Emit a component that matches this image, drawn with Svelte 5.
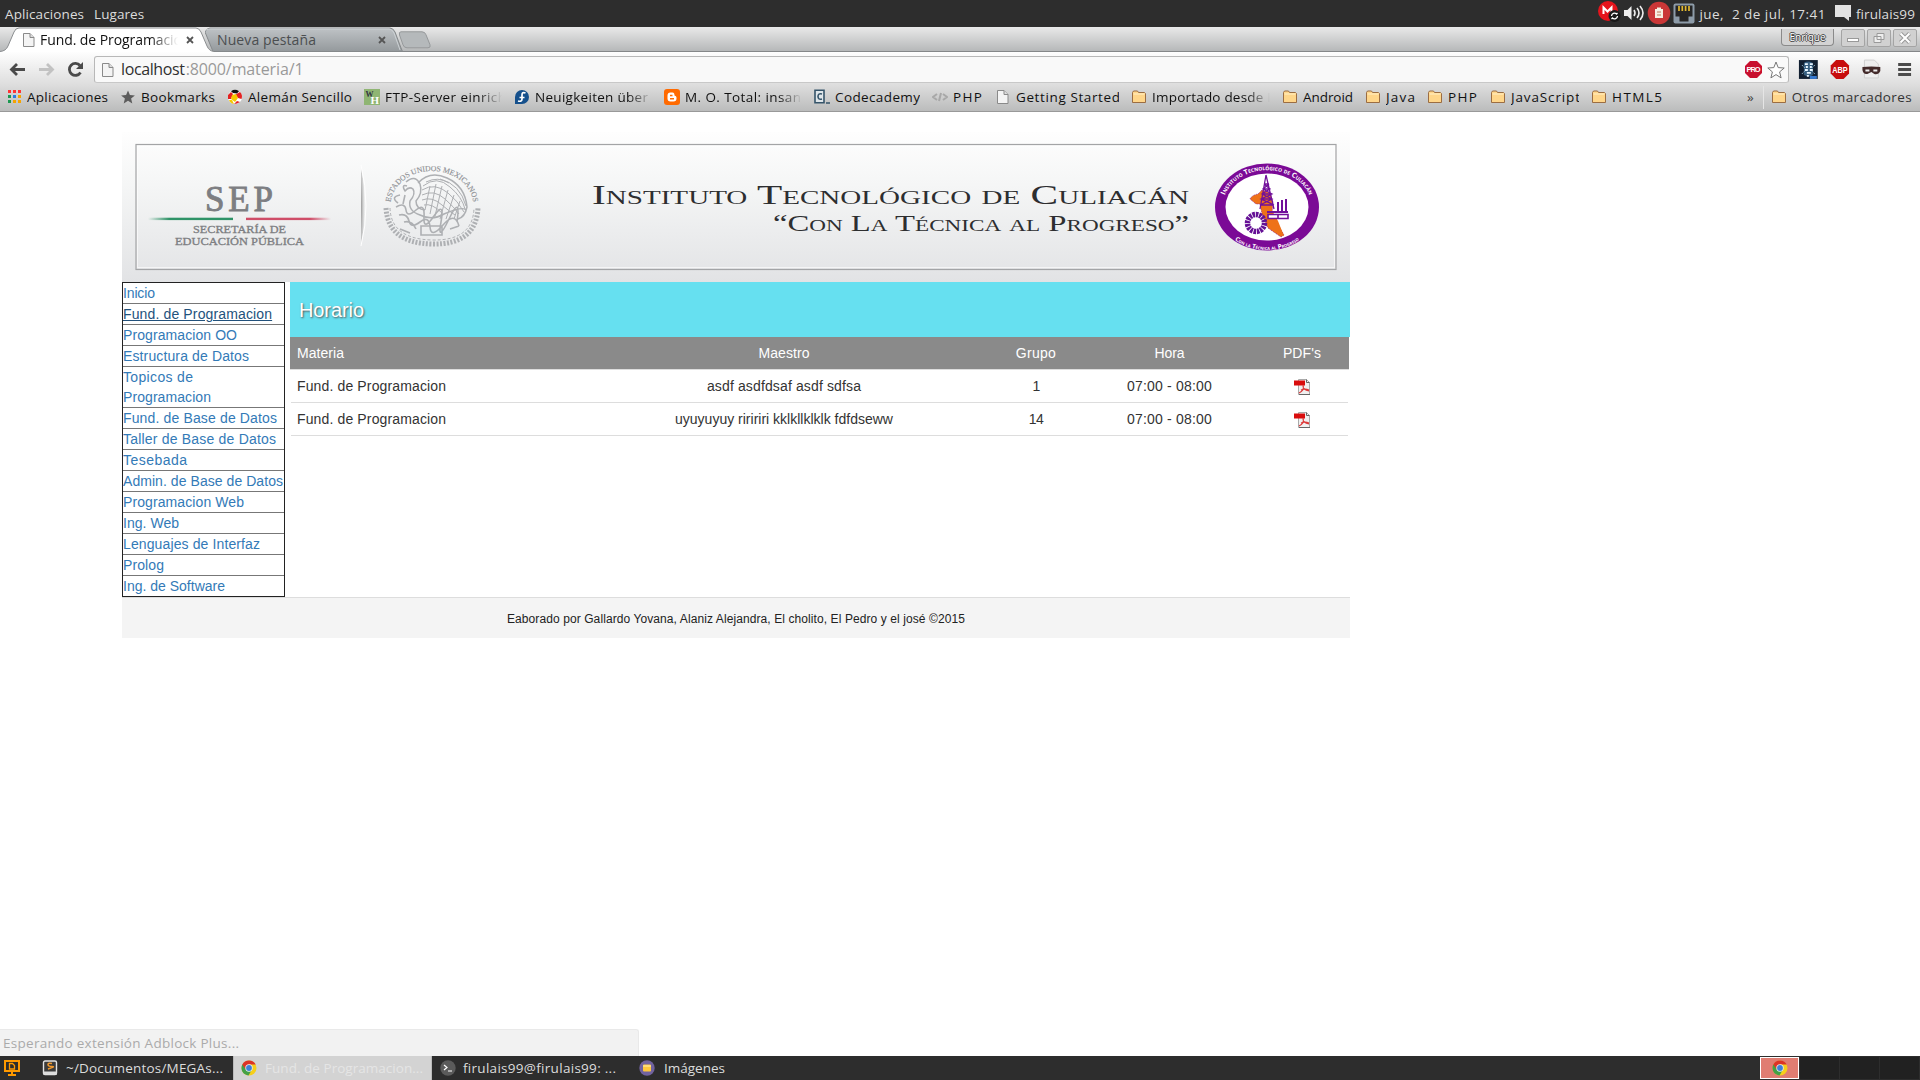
<script>
  // Tracks a label's letters out (or in) until it takes up the given width.
  function fit(node, width) {
    const natural = node.getBoundingClientRect().width;
    const gaps = Math.max(1, node.textContent.length - 1);
    node.style.letterSpacing = (width - natural) / gaps + 'px';
  }

  const bookmarks = [
    { icon: 'apps', text: 'Aplicaciones', w: 81, fit: 81 },
    { icon: 'star', text: 'Bookmarks', w: 74, fit: 74 },
    { icon: 'ball', text: 'Alemán Sencillo', w: 104, fit: 104 },
    { icon: 'wh', text: 'FTP-Server einrich', w: 117, fit: 121, fade: true },
    { icon: 'fedora', text: 'Neuigkeiten über', w: 117, fit: 113, fade: true },
    { icon: 'blogger', text: 'M. O. Total: insan', w: 117, fit: 116, fade: true },
    { icon: 'code', text: 'Codecademy', w: 85, fit: 85 },
    { icon: 'php', text: 'PHP', w: 30, fit: 29 },
    { icon: 'page', text: 'Getting Started', w: 103, fit: 104 },
    { icon: 'folder', text: 'Importado desde I', w: 118, fit: 119, fade: true },
    { icon: 'folder', text: 'Android', w: 50, fit: 50 },
    { icon: 'folder', text: 'Java', w: 29, fit: 29 },
    { icon: 'folder', text: 'PHP', w: 30, fit: 29 },
    { icon: 'folder', text: 'JavaScript', w: 68, fit: 69 },
    { icon: 'folder', text: 'HTML5', w: 50, fit: 50 }
  ];

  const subjects = [
    [['Inicio', 32]],
    [['Fund. de Programacion', 149]],
    [['Programacion OO', 114]],
    [['Estructura de Datos', 126]],
    [['Topicos de', 70], ['Programacion', 88]],
    [['Fund. de Base de Datos', 154]],
    [['Taller de Base de Datos', 153]],
    [['Tesebada', 64]],
    [['Admin. de Base de Datos', 160]],
    [['Programacion Web', 121]],
    [['Ing. Web', 56]],
    [['Lenguajes de Interfaz', 137]],
    [['Prolog', 41]],
    [['Ing. de Software', 102]]
  ];

  const rows = [
    { teacher: 'asdf asdfdsaf asdf sdfsa', w: 154, group: '1', gw: 7 },
    { teacher: 'uyuyuyuy riririri kklkllklklk fdfdseww', w: 218, group: '14', gw: 15 }
  ];
</script>

{#snippet page()}
  <svg class="ic" viewBox="0 0 16 16"><path d="M2.500 1.500h6.500l4 4v9H2.500z" fill="#f4f4f4" stroke="#8a8a8a" /><path d="M9 1.500v4h4" fill="#ddd" stroke="#8a8a8a" /></svg>
{/snippet}

{#snippet chrome()}
  <svg class="ic" viewBox="0 0 16 16"><circle cx="8" cy="8" r="7.500" fill="#f6cf1a" /><path d="M8 8L1.300 4.600A7.500 7.500 0 0 0 7.500 15.500L11 9.500z" fill="#43a047" /><path d="M1.300 4.600A7.500 7.500 0 0 1 14.700 4.600H8L4.500 9z" fill="#dc3327" /><circle cx="8" cy="8" r="3.700" fill="#eee" /><circle cx="8" cy="8" r="2.900" fill="#3f80d8" /></svg>
{/snippet}

{#snippet icon(name)}
  {#if name === 'page'}
    {@render page()}
  {:else}
    <svg class="ic" viewBox="0 0 16 16">
      {#if name === 'apps'}
        {#each ['#f33', '#f33', '#f33', '#1a9850', '#2a7de1', '#f5a300', '#1a9850', '#f5a300', '#f5a300'] as c, i}
          <rect x={2 + (i % 3) * 5} y={1 + Math.floor(i / 3) * 5} width="3" height="3" fill={c} />
        {/each}
      {:else if name === 'star'}
        <path d="M8 1.500l1.900 4.600 5 .3-3.800 3.200 1.200 4.900L8 11.800l-4.300 2.700 1.200-4.900L1.100 6.400l5-.3z" fill="#5c5c5c" />
      {:else if name === 'ball'}
        <circle cx="8" cy="8" r="7" fill="#fff" /><path d="M4 2.200Q8-.5 12 2.200L10 4.500 6 4z" fill="#111" /><path d="M1 6l3-3 2 2-2 5-3 0zM8.500 5.500L13 3q3 3 1.500 7L11 9zM7 15l3-3 3 1q-3 2-6 2z" fill="#e32222" /><path d="M5 6l4-1 2 4-3 4-4-3zM2 11l3 0 2 4q-4-1-5-4z" fill="#f5c800" />
      {:else if name === 'wh'}
        <rect width="16" height="16" fill="#8fb573" /><text x="1.500" y="7.500" class="serif" font-size="8" font-weight="bold" fill="#334">W</text><text x="6.500" y="15" class="serif" font-size="11" font-weight="bold" fill="#fff">H</text>
      {:else if name === 'fedora'}
        <path d="M1 15V8a7 7 0 1 1 7 7z" fill="#15508c" /><path d="M11.500 4Q8 2.500 8 6v4q0 3-4 2M5.500 8.500h5" fill="none" stroke="#fff" stroke-width="1.700" />
      {:else if name === 'blogger'}
        <rect width="16" height="16" rx="3" fill="#ff6a00" /><path d="M5 3.500h3.500q2 0 2 3 2 .3 2 2v1q0 3-3 3H6.500q-3 0-3-3v-3q0-3 3-3z" fill="#fff" /><path d="M6 6.500h2.500M6 9.700h4" stroke="#ff6a00" stroke-width="1.500" />
      {:else if name === 'code'}
        <path d="M1 1.200h9v12.600H1z" fill="#dfe6ea" stroke="#35546a" stroke-width="1.600" /><path d="M8 5Q4 4 4 7.500T8 10M12 14h4" fill="none" stroke="#35546a" stroke-width="1.600" />
      {:else if name === 'php'}
        <path d="M5 5L1 8l4 3M11 5l4 3-4 3M9 4l-2 8" fill="none" stroke="#a8a8a8" stroke-width="2" />
      {:else if name === 'folder'}
        <path d="M1.500 13.500v-10l1-1.500h4l1 1.500h6l1 1v9z" fill="#ffd68a" stroke="#9b6d42" /><path d="M2.500 5h11" stroke="#fff0c8" />
      {/if}
    </svg>
  {/if}
{/snippet}

<div class="screen">
  <div class="panel">
    <span class="menu" use:fit={79}>Aplicaciones</span>
    <span class="menu second" use:fit={50}>Lugares</span>
    <div class="tray">
      <svg class="tray-icons" viewBox="0 0 100 27">
        <circle cx="11" cy="11" r="10" fill="#e5141c" /><path d="M6.500 14V7.500l4 4 4-4V14" fill="none" stroke="#fff" stroke-width="2" /><circle cx="17.500" cy="16" r="6" fill="#191919" /><path d="M14.500 16a3 3 0 0 1 5-2l1-1M20.500 16a3 3 0 0 1-5 2l-1 1" fill="none" stroke="#fff" stroke-width="1.300" />
        <path d="M27 10h3.500l4-4v14l-4-4H27z" fill="#eee" /><path d="M37 10q2 3 0 6M40 8q4 5 0 10M43 6q6 7 0 14" fill="none" stroke="#eee" stroke-width="1.600" />
        <circle cx="62" cy="13" r="11.300" fill="#ca3737" /><path d="M58 9h8v9h-8z" fill="#f6efe2" /><path d="M60 7.500h4v2h-4z" fill="#f6efe2" /><path d="M60 12h4M60 15h4" stroke="#bb7b5b" />
        <rect x="76.500" y="3.500" width="21" height="20" rx="2" fill="#8d9ba8" /><path d="M78.500 5.500h17v11h-4v5h-9v-5h-4z" fill="#252525" /><path d="M82 6v5M85.300 6v5M88.600 6v5M92 6v5" stroke="#e3b92f" stroke-width="1.700" />
      </svg>
      <span class="menu date" use:fit={126}>jue,&nbsp; 2 de jul, 17:41</span>
      <svg class="chat" viewBox="0 0 18 18"><path d="M1 1h16v12h-2v4l-5-4H1z" fill="#e2e2e2" /></svg>
      <span class="menu" use:fit={59}>firulais99</span>
    </div>
  </div>

  <div class="tabstrip">
    <div class="tab active">
      <svg class="shape" viewBox="0 0 214 25"><path d="M0 24.500Q6 24 8 19L14 5Q15.500 1 19 1H196Q199 1 201 5L207 19Q209 24 214 24.500V25H0z" fill="#fff" /><path d="M0 24.500Q6 24 8 19L14 5Q15.500 1 19 1H196Q199 1 201 5L207 19Q209 24 214 24.500" fill="none" stroke="#8b8e90" /></svg>
      {@render page()}
      <span class="title fade"><span class="fit" use:fit={142}>Fund. de Programacio</span></span>
      <svg class="x" viewBox="0 0 8 8"><path d="M1 1l6 6M7 1L1 7" stroke="#555" stroke-width="1.800" /></svg>
    </div>
    <div class="tab">
      <svg class="shape" viewBox="0 0 198 25">
        <defs><linearGradient id="tabfill" x2="0" y2="1"><stop offset="0" stop-color="#bfc3c6" /><stop offset="1" stop-color="#94999c" /></linearGradient></defs>
        <path d="M0 5Q2 1 5 1H185Q188 1 190 5L196 21Q197 24 198 24.500H8z" fill="url(#tabfill)" stroke="#85898b" /><path d="M1 3Q3 2 6 2h178q3 0 5 4l6 17" fill="none" stroke="#ccd1d4" /></svg>
      <span class="title dim"><span class="fit" use:fit={99}>Nueva pestaña</span></span>
      <svg class="x" viewBox="0 0 8 8"><path d="M1 1l6 6M7 1L1 7" stroke="#555" stroke-width="1.800" /></svg>
    </div>
    <svg class="newtab" viewBox="0 0 34 18"><path d="M3 .8h21q3 0 4 3l4 10q1 3-2 3H9q-3 0-4-3L1.500 4Q.6.800 3 .8z" fill="#b5b9bb" stroke="#96999b" /></svg>
    <div class="wincontrols">
      <span class="user"><span class="fit" use:fit={36}>Enrique</span></span>
      <svg viewBox="0 0 24 18"><rect x=".5" y=".5" width="23" height="17" rx="1.500" fill="#d1d1d1" stroke="#a4a4a4" /><rect x="6.500" y="9.500" width="11" height="3" fill="#fff" stroke="#999" /></svg>
      <svg viewBox="0 0 24 18"><rect x=".5" y=".5" width="23" height="17" rx="1.500" fill="#d1d1d1" stroke="#a4a4a4" /><path d="M10 4.500h7v6h-7zM7 7.500h7v6H7z" fill="#eee" stroke="#999" /></svg>
      <svg viewBox="0 0 24 18"><rect x=".5" y=".5" width="23" height="17" rx="1.500" fill="#d1d1d1" stroke="#a4a4a4" /><path d="M7.500 4.500l9 9M16.500 4.500l-9 9" stroke="#999" stroke-width="4" /><path d="M7.500 4.500l9 9M16.500 4.500l-9 9" stroke="#fff" stroke-width="2" /></svg>
    </div>
  </div>

  <div class="toolbars">
    <div class="toolbar">
      <svg class="nav" viewBox="0 0 94 33">
        <path d="M25 17.500H12M17 12l-5.500 5.500L17 23" fill="none" stroke="#4a4a4a" stroke-width="2.800" />
        <path d="M39 17.500h13M47 12l5.500 5.500L47 23" fill="none" stroke="#c2c2c2" stroke-width="2.800" />
        <path d="M80.500 20.500A6 6 0 1 1 80 13.500" fill="none" stroke="#4a4a4a" stroke-width="2.800" /><path d="M83 10v7h-7z" fill="#4a4a4a" />
      </svg>
      <div class="omnibox">
        {@render page()}
        <span class="url host" use:fit={64}>localhost</span><span class="url path" use:fit={118}>:8000/materia/1</span>
        <svg class="omni-right" viewBox="0 0 42 20"><path d="M6 1h7l5 5v7l-5 5H6l-5-5V6z" fill="#c8102e" /><text x="2.500" y="12.200" class="badge" font-size="7.500" textLength="14">PRO</text><path d="M32 2l2.200 5.600 6 .4-4.600 3.900 1.500 6L32 14.600l-5.100 3.300 1.500-6L23.800 8l6-.4z" fill="#fff" stroke="#777" /></svg>
      </div>
      <svg class="ext" viewBox="0 0 132 33">
        <rect x="10" y="8" width="19" height="19" fill="#111f30" /><path d="M15 11q4-3 9 0v12q-4 3-9 0z" fill="#365f80" /><path d="M13 13l3 3M26 13l-3 3M13 22l3-3M26 22l-3-3" stroke="#8db4cc" stroke-dasharray="2 1" /><path d="M16 12h3M21 12h3M17 15h2M21 15h2M16 18h3M21 18h3M18 21h4M18 24h2" stroke="#e8f6ff" stroke-width="1.800" /><path d="M21 24h7v3h-7z" fill="#3679cf" />
        <path d="M47.500 8h7.500l5.500 5.500v8L55 27h-7.500L42 21.500v-8z" fill="#c70d0d" /><text x="43.500" y="21" class="badge" font-size="9.500" textLength="15.500" lengthAdjust="spacingAndGlyphs">ABP</text>
        <path d="M76 8h10l4 4v14H76z" fill="#eee" stroke="#d0d0d0" /><path d="M74 15q9-1 18 0v4q-2 4-6 3l-3-2-4 2q-4 1-5-4z" fill="#432a2a" /><path d="M77 18.500h4M85 18.500h4" stroke="#eee" stroke-width="2" />
        <path d="M110 12.500h13M110 17.500h13M110 22.500h13" stroke="#4b4b4b" stroke-width="3" />
      </svg>
    </div>
    <div class="bookmarks">
      {#each bookmarks as b}
        <div class="bm">
          {@render icon(b.icon)}
          <span class="bmtext" class:fade={b.fade} style:width="{b.w}px"><span class="fit" use:fit={b.fit}>{b.text}</span></span>
        </div>
      {/each}
      <span class="more">»</span>
      <div class="bm other">
        {@render icon('folder')}
        <span class="bmtext"><span class="fit" use:fit={120}>Otros marcadores</span></span>
      </div>
    </div>
  </div>

  <main>
    <div class="container">
      <svg class="banner" viewBox="122 132 1228 150">
        <defs>
          <linearGradient id="bg" x2="0" y2="1"><stop offset="0" stop-color="#fefefe" /><stop offset=".35" stop-color="#f5f6f6" /><stop offset="1" stop-color="#e2e3e5" /></linearGradient>
          <linearGradient id="green"><stop offset="0" stop-color="#2f9367" stop-opacity="0" /><stop offset=".25" stop-color="#2f9367" /></linearGradient>
          <linearGradient id="red"><stop offset=".75" stop-color="#cf4d68" /><stop offset="1" stop-color="#cf4d68" stop-opacity="0" /></linearGradient>
          <radialGradient id="shade" cx="0" cy=".5" r="1"><stop offset="0" stop-color="#999" /><stop offset="1" stop-color="#bbb" stop-opacity="0" /></radialGradient>
          <path id="sealarc" d="M391.500 213A41.500 34.500 0 1 1 472.500 213" />
          <path id="logoarc" d="M1223.400 214A44.500 36.500 0 1 1 1310.600 214" />
          <path id="logobottom" d="M1219 219A49.500 41 0 0 0 1315 219" />
        </defs>
        <rect x="122" y="132" width="1228" height="150" fill="url(#bg)" />
        <rect x="137.500" y="146.500" width="1197" height="121" fill="none" stroke="#fff" stroke-opacity=".6" />
        <rect x="136" y="144.500" width="1200" height="125" fill="none" stroke="#a3a4a6" stroke-width="1.200" />
        <g class="serif" fill="#7d7e82">
          <text x="205" y="211" font-size="35" textLength="68" stroke="#7d7e82" stroke-width=".9">SEP</text>
          <text x="193" y="233" font-size="11" textLength="93" lengthAdjust="spacingAndGlyphs" stroke="#7d7e82" stroke-width=".3">SECRETARÍA DE</text>
          <text x="175" y="245" font-size="11" textLength="129" lengthAdjust="spacingAndGlyphs" stroke="#7d7e82" stroke-width=".3">EDUCACIÓN PÚBLICA</text>
        </g>
        <rect x="148" y="217.700" width="85" height="2.400" fill="url(#green)" /><rect x="246" y="217.700" width="85" height="2.400" fill="url(#red)" />
        <path d="M361 168Q369 206 361 244z" fill="url(#shade)" /><path d="M361 165Q371 206 361 246" fill="none" stroke="#fff" />
        <g fill="none" stroke="#aeb0b3" stroke-width="1">
          <path d="M386 208Q388 243 432 244T478 208" stroke-width="5" stroke-dasharray="2 1.500" /><path d="M390 208Q391 239 432 240T474 208" stroke-dasharray="3 2" />
          <path d="M407 186q-6-2-2 5 4-5 8-2 3 5-3 12-2 10 10 14 12 6 24-1 19-8 22-4M406 182q9-8 14 2 3 9-4 17 0 8 9 9M418 183q12-13 29-5 18 8 20 29-2 10-9 12" stroke-width="1.500" />
          <path d="M423 186q14-11 27 1 12 10 15 22M422 190q13-8 26 3 10 8 16 19M422 195q12-6 23 4 9 8 14 15M422 200q10-4 20 5 7 6 13 10M424 205q8-2 18 8M426 182q12-6 23 1M440 179q20 5 26 27M430 186l-5 24M436 184l-6 30M442 186l-7 30M448 190l-8 29M454 195l-8 24M460 201l-6 18" />
          <path d="M396 207q9-5 10 3t10 0 8 7 10-1 7 6 8-3 8 3M399 215q8-2 10 6t11 1 10 5 13-2 16 1M404 222q8-2 12 7M421 226h21v9h-21zM400 229l10 4M450 229l9-3M398 203q-8-6 2-8M405 195l-2 9" stroke-width="1.600" />
        </g>
        <text class="serif" font-size="7.700" fill="#8e9094" stroke="#8e9094" stroke-width=".15" text-anchor="middle"><textPath href="#sealarc" startOffset="50%">ESTADOS UNIDOS MEXICANOS</textPath></text>
        <g class="serif caps" fill="#2d2e30">
          <text x="592" y="204" font-size="27" textLength="597" lengthAdjust="spacingAndGlyphs">Instituto Tecnológico de Culiacán</text>
          <text x="773" y="231" font-size="24" textLength="416" lengthAdjust="spacingAndGlyphs">“Con La Técnica al Progreso”</text>
        </g>
        <ellipse cx="1267" cy="207" rx="52" ry="43.500" fill="#7b0a96" /><ellipse cx="1267" cy="207" rx="41.500" ry="33.500" fill="#fff" />
        <path d="M1250 199q2-4 8-5l4-4 8 3 3 9-1 11 5 10 7 12-3 2-13-9-6-14-2-10-4 0z" fill="#ee7219" stroke="#7b0a96" stroke-width=".7" stroke-dasharray="1 1" />
        <circle cx="1256" cy="223" r="8.500" fill="none" stroke="#651095" stroke-width="5.500" stroke-dasharray="2.500 .8" />
        <path d="M1261 210q12 6 20 25l3 1-6-15-8-14z" fill="#ee7219" />
        <path d="M1266 175l-6 34M1266 175l8 34M1264 184h5M1263 189h7M1262 194h9M1261 199h11M1260 205h13M1264 184l6 5-8 5 10 5-12 6M1269 184l-6 5 9 5-11 5 13 6" fill="none" stroke="#71109a" stroke-width="1.300" />
        <path d="M1267 211h21v2h-21zM1277 202h2v10h-2zM1281 200h2v12h-2zM1285 199h2v13h-2z" fill="#71109a" /><path d="M1268 214.500h20v4h-20zM1278 214v5" fill="#fff" stroke="#71109a" stroke-width="1.600" />
        <text class="logotext" font-size="7" text-anchor="middle"><textPath href="#logoarc" startOffset="50%">Instituto Tecnológico de Culiacán</textPath></text>
        <text class="logotext" font-size="6.300" text-anchor="middle"><textPath href="#logobottom" startOffset="50%">Con la Técnica al Progreso</textPath></text>
      </svg>

      <div class="content">
        <nav>
          {#each subjects as lines, i}
            <a class:hover={i === 1}>
              {#each lines as [text, w]}<span class="fit" use:fit={w}>{text}</span>{/each}
            </a>
          {/each}
        </nav>
        <section>
          <h1><span class="fit" use:fit={65}>Horario</span></h1>
          <div class="row head">
            <span class="left"><span class="fit" use:fit={47}>Materia</span></span>
            <span><span class="fit" use:fit={51}>Maestro</span></span>
            <span><span class="fit" use:fit={40}>Grupo</span></span>
            <span><span class="fit" use:fit={30}>Hora</span></span>
            <span><span class="fit" use:fit={38}>PDF's</span></span>
          </div>
          {#each rows as r}
            <div class="row">
              <span class="left"><span class="fit" use:fit={149}>Fund. de Programacion</span></span>
              <span><span class="fit" use:fit={r.w}>{r.teacher}</span></span>
              <span><span class="fit" use:fit={r.gw}>{r.group}</span></span>
              <span><span class="fit" use:fit={85}>07:00 - 08:00</span></span>
              <span><svg class="pdf" viewBox="0 0 17 16"><path d="M4.500.5h8l3 3v12h-11z" fill="#f0f0f0" stroke="#aaa" /><path d="M12.500.5v3h3M5 15.500h11" fill="none" stroke="#666" /><rect y="1.500" width="11" height="5" fill="#d90d0d" /><path d="M9 6q2 5-4 8M9 7q0 4 6 5M7 11q4-2 8 0" fill="none" stroke="#dc3939" stroke-width="1.100" /></svg></span>
            </div>
          {/each}
        </section>
      </div>
      <footer><span class="fit" use:fit={458}>Eaborado por Gallardo Yovana, Alaniz Alejandra, El cholito, El Pedro y el josé ©2015</span></footer>
    </div>
    <div class="status"><span class="fit" use:fit={236}>Esperando extensión Adblock Plus...</span></div>
  </main>

  <div class="taskbar">
    <div class="launcher"><svg class="ic" viewBox="0 0 16 16"><path d="M1 1h14v10H1zM8 11v4M4 15h8" fill="none" stroke="#f90" stroke-width="2" /><path d="M5.500 3.500h3l2 2v3.500h-5z" fill="none" stroke="#f90" stroke-width="1.300" /></svg></div>
    <div class="task sublime"><svg class="ic" viewBox="0 0 16 16"><rect x="1.500" y="1" width="13" height="13.500" rx="1.500" fill="#3b3b3b" stroke="#e4e4e4" stroke-width="1.400" /><path d="M1 11.500h14v3H1z" fill="#ddd" /><path d="M10 3.500Q6 2.500 6 4.500t4 2-4 2.500" fill="none" stroke="#f29a2e" stroke-width="1.500" /></svg><span class="fit" use:fit={157}>~/Documentos/MEGAs...</span></div>
    <div class="task current">{@render chrome()}<span class="fit" use:fit={158}>Fund. de Programacion...</span></div>
    <div class="task terminal"><svg class="ic" viewBox="0 0 16 16"><circle cx="8" cy="8" r="7.700" fill="#5b5b5b" /><path d="M4 5l3 2.500L4 10M8 11h4" fill="none" stroke="#fff" stroke-width="1.200" /></svg><span class="fit" use:fit={153}>firulais99@firulais99: ...</span></div>
    <div class="task"><svg class="ic" viewBox="0 0 16 16"><circle cx="8" cy="8" r="7.700" fill="#71639f" /><rect x="4" y="4.500" width="8" height="7" rx="1" fill="#ffc73c" /><path d="M4 6h8" stroke="#fff0b0" /></svg><span class="fit" use:fit={61}>Imágenes</span></div>
    <div class="spaces"><div class="space on">{@render chrome()}</div><div class="space"></div><div class="space"></div><div class="space"></div></div>
  </div>
</div>

<style>
  :global(body) { margin: 0; background: #fff; }
  * { box-sizing: border-box; }
  .screen { width: 1920px; height: 1080px; display: flex; flex-direction: column; overflow: hidden; font-family: 'Open Sans', 'Noto Sans', sans-serif; font-size: 13.5px; }
  svg { display: block; flex: none; }
  .ic { width: 16px; height: 16px; }
  .fit { display: inline-block; width: max-content; white-space: pre; flex: none; }
  .serif { font-family: 'Liberation Serif', serif; }
  .caps { font-variant: small-caps; }
  .badge { font-family: 'Liberation Sans', sans-serif; font-weight: bold; fill: #fff; }
  .logotext { font-family: 'Open Sans', sans-serif; font-weight: bold; font-variant: small-caps; fill: #fff; }
  .fade { -webkit-mask-image: linear-gradient(90deg, #000 80%, transparent); mask-image: linear-gradient(90deg, #000 80%, transparent); }

  .panel { height: 27px; flex: none; display: flex; align-items: center; background: #2d2d2d; color: #dcdcdc; padding: 1px 5px 0 5px; }
  .menu { white-space: pre; flex: none; }
  .second { margin-left: 10px; }
  .tray { margin-left: auto; display: flex; align-items: center; height: 27px; }
  .tray-icons { width: 100px; height: 27px; margin-right: 2px; margin-top: -2px; }
  .date { margin-right: 8px; }
  .chat { width: 18px; height: 18px; margin-right: 4px; margin-top: -2px; }

  .tabstrip { height: 25px; flex: none; display: flex; background: linear-gradient(#e9e9e9, #b6b8b9); border-bottom: 1px solid #858789; padding-right: 3px; }
  .tab { position: relative; width: 195px; height: 25px; display: flex; align-items: center; padding-left: 12px; }
  .tab.active { width: 205px; padding-left: 21px; z-index: 1; }
  .shape { position: absolute; left: 0; top: 0; width: 198px; height: 25px; }
  .active .shape { width: 214px; }
  .tab .ic, .title, .x { position: relative; }
  .title { width: 138px; margin-left: 3px; overflow: hidden; color: #111; font-size: 14px; line-height: 24px; }
  .title.dim { width: 161px; margin-left: 0; color: #4b4e50; }
  .x { width: 8px; height: 8px; margin-left: 8px; }
  .dim + .x { margin-left: 0; }
  .newtab { width: 34px; height: 18px; margin: 4px 0 0 -2px; }
  .wincontrols { margin-left: auto; display: flex; gap: 2px; padding-top: 2px; }
  .wincontrols svg { width: 24px; height: 18px; }
  .user { width: 53px; height: 17px; margin-right: 5px; border: 1px solid #8a8a8a; border-top: 0; border-radius: 0 0 4px 4px; background: #d3d3d3; font-size: 10px; line-height: 17px; text-align: center; color: #fff; text-shadow: 1px 0 0 #444, -1px 0 0 #444, 0 1px 0 #444, 0 -1px 0 #444; }

  .toolbars { height: 60px; flex: none; background: linear-gradient(#fefefe, #dedede 55%, #bbbcbc); border-bottom: 1px solid #999; }
  .toolbar { height: 33px; display: flex; align-items: flex-start; }
  .nav { width: 94px; height: 33px; }
  .omnibox { width: 1695px; height: 27px; margin-top: 4px; display: flex; align-items: center; border: 1px solid #b8b8b8; border-bottom-color: #c8c8c8; border-radius: 3px; background: #f9f9f9; padding: 0 2px 0 5px; }
  .url { font-size: 16px; line-height: 22px; margin-bottom: 1px; white-space: pre; flex: none; }
  .host { color: #303030; margin-left: 5px; }
  .path { color: #999; margin-left: 1px; }
  .omni-right { width: 42px; height: 20px; margin-left: auto; }
  .ext { width: 131px; height: 33px; }
  .bookmarks { height: 24px; display: flex; align-items: center; gap: 12px; padding: 0 8px 0 6px; color: #111; }
  .bm { display: flex; align-items: center; gap: 5px; flex: none; }
  .bmtext { display: block; overflow: hidden; line-height: 22px; font-size: 13.5px; }
  .more { margin-left: auto; margin-right: -3px; color: #444; }
  .other { border-left: 1px solid #e5e5e5; padding-left: 7px; height: 23px; color: #333; }

  main { flex: 1; position: relative; padding: 20px 0 0 122px; font-family: 'Liberation Sans', Arial, sans-serif; font-size: 14px; color: #333; }
  .container { width: 1228px; }
  .banner { width: 1228px; height: 150px; }
  .content { display: flex; gap: 5px; height: 315px; }
  nav { width: 163px; border: 1px solid #222; }
  nav a { display: flex; flex-direction: column; line-height: 20px; border-bottom: 1px solid #777; color: #337ab7; }
  nav a:last-child { border-bottom: 0; }
  nav a.hover .fit { color: #23527c; text-decoration: underline; }
  section { width: 1060px; }
  h1 { margin: 0; height: 55px; line-height: 57px; padding-left: 9px; background: #66e0f0; color: #fff; font-size: 20px; font-weight: normal; text-shadow: 1px 1px 2px #555; }
  .row { display: grid; grid-template-columns: 288px 410px 94px 173px 92px; height: 33px; margin: 0 2px 0 1px; line-height: 32px; text-align: center; border-bottom: 1px solid #ddd; }
  .row .left { text-align: left; padding-left: 6px; }
  .row.head { margin: 0 1px 0 0; padding-left: 1px; background: #8a8a8a; color: #fff; }
  .pdf { width: 17px; height: 16px; margin: 9px auto 0; }
  footer { height: 41px; border-top: 1px solid #ddd; background: #f4f4f4; font-size: 12px; line-height: 42px; text-align: center; color: #222; }
  .status { position: absolute; left: 0; bottom: 0; width: 639px; height: 27px; padding-left: 3px; border: 1px solid #e9e9e9; border-width: 1px 1px 0 0; border-radius: 0 3px 0 0; background: #f2f2f2; color: #aaa; line-height: 26px; font-family: 'Open Sans', sans-serif; font-size: 13.5px; }

  .taskbar { height: 24px; flex: none; display: flex; background: #2d2d2d; color: #dcdcdc; }
  .launcher { width: 42px; padding: 4px 0 0 4px; }
  .task { display: flex; align-items: center; gap: 7px; }
  .sublime { width: 191px; gap: 8px; }
  .current { width: 199px; padding-left: 7px; gap: 8px; background: #d3d3d3; border: 1px solid #bbb; border-width: 0 1px; color: #e5e5e5; }
  .terminal { width: 207px; padding-left: 8px; }
  .task:nth-child(5) { gap: 9px; }
  .spaces { margin-left: auto; display: flex; gap: 1px; padding: 1px 1px 1px 0; }
  .space { width: 39px; background: #212121; }
  .on { display: flex; align-items: center; justify-content: center; border: 1px solid #fff; background: #e07d72; }
</style>
